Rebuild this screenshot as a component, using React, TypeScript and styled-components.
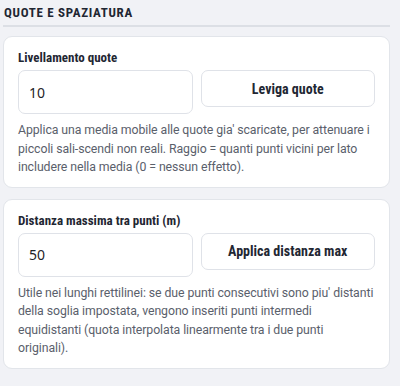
import React from "react";
import styled, { createGlobalStyle } from "styled-components";

const Global = createGlobalStyle`
  html, body { margin: 0; padding: 0; background: #f1f2f6; }
  body { font-family: "Noto Sans", "Open Sans", sans-serif; }
  * { box-sizing: border-box; }
`;

const condensed = `
  font-family: "Roboto Condensed", "Noto Sans", "DejaVu Sans Condensed", sans-serif;
  font-stretch: 70%;
  font-weight: 700;
`;

const Page = styled.div`
  width: 400px;
  min-height: 386px;
  padding: 5px 10px 16px 3px;
  display: flex;
  flex-direction: column;
`;

const SectionTitle = styled.h2`
  margin: 0 0 0 1px;
  ${condensed}
  font-size: 13px;
  letter-spacing: 0.7px;
  color: #1f2733;
  text-transform: uppercase;
  line-height: 16px;
`;

const Rule = styled.div`
  height: 2px;
  background: #dcdfe5;
  margin: 4px 0 9px;
`;

const Card = styled.section`
  background: #ffffff;
  border: 1px solid #e2e5ea;
  border-radius: 9px;
  padding: 13px 14px 10px 14px;
  margin-bottom: 11px;
`;

const Label = styled.div`
  ${condensed}
  font-size: 13px;
  color: #1f2733;
  line-height: 16px;
  margin-bottom: 4px;
`;

const Row = styled.div`
  display: grid;
  grid-template-columns: 1fr 1fr;
  gap: 8px;
  align-items: start;
`;

const Input = styled.input`
  height: 44px;
  width: 100%;
  border: 1px solid #dfe2e8;
  border-radius: 7px;
  padding: 0 10px;
  font-family: "Noto Sans", sans-serif;
  font-size: 14px;
  color: #1f2328;
  background: #fff;
  outline: none;
`;

const Button = styled.button`
  height: 37px;
  width: 100%;
  border: 1px solid #dfe2e8;
  border-radius: 7px;
  background: #fff;
  ${condensed}
  font-size: 14px;
  color: #1f2733;
  cursor: pointer;
`;

const Hint = styled.p`
  margin: 7px 0 0;
  font-family: Roboto, "Noto Sans", sans-serif;
  font-size: 12.3px;
  letter-spacing: -0.08px;
  line-height: 18.5px;
  color: #5a606b;
`;

function Field({ label, value, action, hint }: { label: string; value: string; action: string; hint: string }) {
  return (
    <Card>
      <Label>{label}</Label>
      <Row>
        <Input defaultValue={value} />
        <Button>{action}</Button>
      </Row>
      <Hint>{hint}</Hint>
    </Card>
  );
}

export default function App() {
  return (
    <Page>
      <Global />
      <SectionTitle>Quote e spaziatura</SectionTitle>
      <Rule />
      <Field
        label="Livellamento quote"
        value="10"
        action="Leviga quote"
        hint="Applica una media mobile alle quote gia' scaricate, per attenuare i piccoli sali-scendi non reali. Raggio = quanti punti vicini per lato includere nella media (0 = nessun effetto)."
      />
      <Field
        label="Distanza massima tra punti (m)"
        value="50"
        action="Applica distanza max"
        hint="Utile nei lunghi rettilinei: se due punti consecutivi sono piu' distanti della soglia impostata, vengono inseriti punti intermedi equidistanti (quota interpolata linearmente tra i due punti originali)."
      />
    </Page>
  );
}
